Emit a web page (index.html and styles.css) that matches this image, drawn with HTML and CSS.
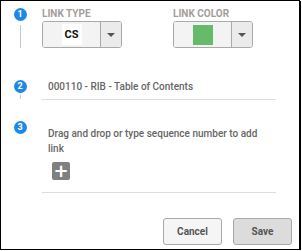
FILE: index.html
```html
<!DOCTYPE html>
<html lang="en">
<head>
  <meta charset="UTF-8">
  <title>Add Link</title>
  <link rel="stylesheet" href="styles.css">
</head>
<body>

  <div class="dialog">
    <div class="steps">

      <div class="step step-1">
        <div class="rail">
          <span class="num">1</span>
          <span class="line"></span>
        </div>
        <div class="content fields">
          <div class="field">
            <label>Link Type</label>
            <div class="select">
              <div class="value"><span class="code">CS</span></div>
              <div class="arrow"><i></i></div>
            </div>
          </div>
          <div class="field">
            <label>Link Color</label>
            <div class="select">
              <div class="value"><span class="swatch"></span></div>
              <div class="arrow"><i></i></div>
            </div>
          </div>
        </div>
      </div>

      <div class="step step-2">
        <div class="rail">
          <span class="num">2</span>
          <span class="line"></span>
        </div>
        <div class="content">
          <div class="row">000110 - RIB - Table of Contents</div>
        </div>
      </div>

      <div class="step step-3">
        <div class="rail">
          <span class="num">3</span>
        </div>
        <div class="content">
          <div class="row drop">
            <p>Drag and drop or type sequence number to add link</p>
            <button class="add" type="button">+</button>
          </div>
        </div>
      </div>

    </div>

    <div class="footer">
      <button class="btn" type="button">Cancel</button>
      <button class="btn btn-save" type="button">Save</button>
    </div>
  </div>

</body>
</html>
```

FILE: styles.css
```css
body { margin: 0; font-family: Roboto, "Liberation Sans", Arial, sans-serif; background: #fff; }
.dialog { box-sizing: border-box; width: 300px; height: 250px; border: 1px solid #000; box-shadow: 1px 1px 0 #000; display: flex; flex-direction: column; }
.steps { padding: 6px 23px 0 12px; }

.step { display: flex; }
.rail { width: 14px; display: flex; flex-direction: column; align-items: center; margin-right: 15px; }
.num { width: 13px; height: 13px; border-radius: 50%; background: #1e88e5; color: #fff; font-size: 9px; font-weight: bold; line-height: 13px; text-align: center; margin-top: 1px; flex: none; }
.line { flex: 1; width: 1px; background: #c8c8c8; margin-top: 4px; }
.content { flex: 1; }

.step-1 { padding-bottom: 28px; margin-bottom: 3px; }
.step-2 { padding-bottom: 9px; margin-bottom: 11px; }
.step-2 .line { margin-top: 2px; margin-bottom: 1px; }

.fields { display: flex; gap: 51px; }
.field label { display: block; font-size: 10px; font-weight: bold; color: #a39d99; text-transform: uppercase; line-height: 12px; margin: 1px 0 1px; }
.select { box-sizing: border-box; width: 80px; height: 27px; display: flex; border: 1px solid #a9a9a9; border-radius: 3px; overflow: hidden; }
.select .value { flex: 1; background: #f3f3f3; display: flex; align-items: center; justify-content: center; }
.select .arrow { width: 20px; background: #ebebeb; border-left: 1px solid #a9a9a9; display: flex; align-items: center; justify-content: center; }
.select .arrow i { width: 0; height: 0; border-left: 4px solid transparent; border-right: 4px solid transparent; border-top: 4px solid #555; }
.code { background: #fff; width: 20px; height: 21px; line-height: 21px; text-align: center; font-size: 11px; font-weight: bold; color: #111; }
.swatch { width: 20px; height: 20px; background: #66bb6a; }

.row { border-bottom: 1px solid #ddd; padding: 1px 0 5px 6px; font-size: 10px; font-weight: 500; color: #666; line-height: 14px; }
.drop { padding-top: 6px; padding-bottom: 12px; }
.drop p { margin: 0; line-height: 15px; padding-right: 12px; }
.add { display: block; width: 18px; height: 18px; margin: 6px 0 0 4px; padding: 0; border: none; border-radius: 2px; background: #808080; color: #fff; font-size: 18px; font-weight: bold; line-height: 18px; font-family: "DejaVu Sans", sans-serif; }

.footer { margin-top: auto; display: flex; justify-content: flex-end; gap: 11px; padding: 0 7px 4px 0; }
.btn { box-sizing: border-box; width: 59px; height: 27px; border: 1px solid #a9a9a9; border-radius: 3px; background: #f5f5f5; color: #555; font-family: Roboto, "Liberation Sans", Arial, sans-serif; font-size: 10px; font-weight: bold; }
.btn-save { background: #dcdcdc; }
```
